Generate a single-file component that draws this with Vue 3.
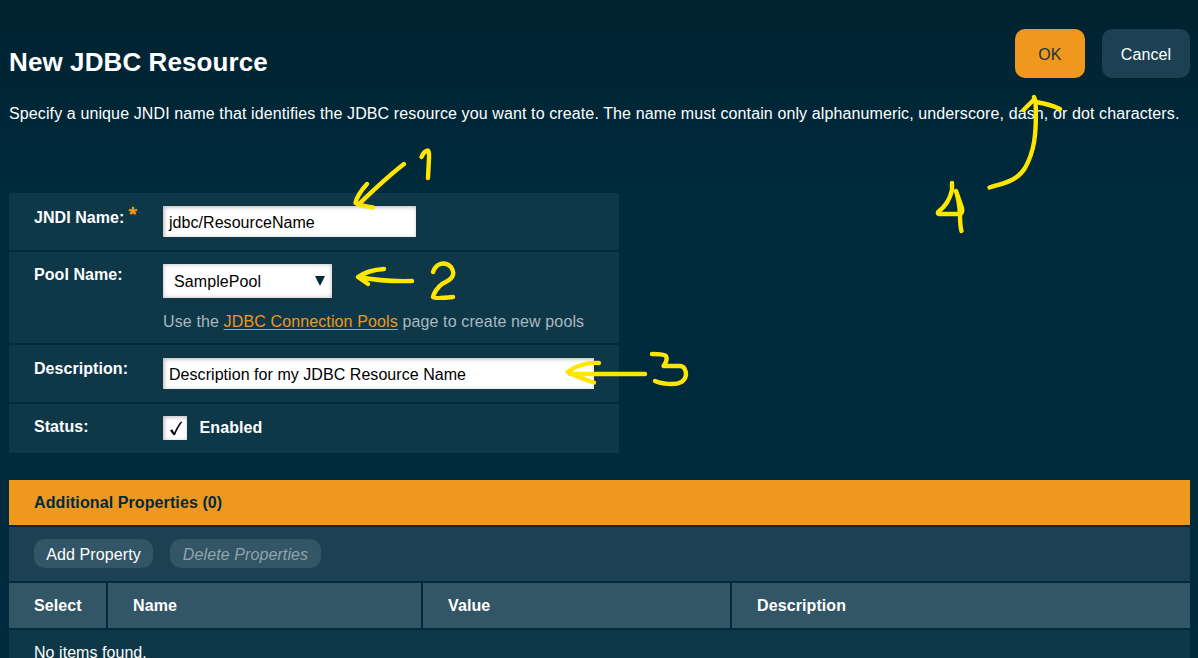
<script setup>
const columns = ['Select', 'Name', 'Value', 'Description']

const strokes = [
  // 1
  'M421.500 157 Q424 151 428 150.500 Q429.500 151 429 158 L428 178',
  'M404 164 Q387 177 358 205 M367 184 Q357 195 355.500 203 Q362 206 373 207.500',
  // 2
  'M433 272 C436 263 445 261 451 267 C457 276 450 280 442 284 C437 288 434 293 433 297 Q435 299 453 297',
  'M412 281 Q385 282 358 277 Q368 270 384 269 M358 277 L368 284',
  // 3
  'M652 354 Q664 354 666 356 Q668 360 663.500 366 H680 C684 366 686 370 686 375 C685 381 680 384 672 384 Q662 384 655 381',
  'M645 374 H570 M599 363 Q581 362 567.500 372 Q572 375 594 382.500',
  // 4
  'M952 183 V190 C950 199 946 206 938.500 211.500 Q937 214 939 214 H960.500 Q963 212 962 208 L956 191 Q959 200 960 214 Q960 226 961.500 231',
  'M989.500 187.500 C1004 183 1017 181 1025 168 C1034 152 1037 135 1035.500 101 L1034 97 M1023.500 110 L1034.500 99 M1036 102 Q1049 104 1060 109',
]
</script>

<template>
  <div class="page">
    <header class="head">
      <h1>New JDBC Resource</h1>
      <div class="actions">
        <button class="btn ok">OK</button>
        <button class="btn cancel">Cancel</button>
      </div>
    </header>
    <p class="intro">Specify a unique JNDI name that identifies the JDBC resource you want to create. The name must contain only alphanumeric, underscore, dash, or dot characters.</p>

    <section class="form">
      <div class="row r-jndi">
        <div class="label req-label">
          <span>JNDI Name:</span>
          <svg class="req" width="10" height="10" viewBox="0 0 10 10"><path d="M5 5V.8M5 5L.9 3.900M5 5L9.100 3.900M5 5L2.500 8.300M5 5L7.500 8.300" /></svg>
        </div>
        <div class="field short">jdbc/ResourceName</div>
      </div>
      <div class="row r-pool">
        <div class="label">Pool Name:</div>
        <div>
          <div class="select">
            <span>SamplePool</span>
            <svg width="10" height="10" viewBox="0 0 10 10"><path d="M0 0H10L5 10Z" /></svg>
          </div>
          <div class="help">Use the <a>JDBC Connection Pools</a> page to create new pools</div>
        </div>
      </div>
      <div class="row r-desc">
        <div class="label">Description:</div>
        <div class="field long">Description for my JDBC Resource Name</div>
      </div>
      <div class="row r-status">
        <div class="label">Status:</div>
        <div class="check">
          <div class="box">
            <svg width="24" height="24" viewBox="0 0 24 24"><path d="M7 14.600L9.200 13.200L11.300 16.800C13 12.500 15.300 8.600 17.800 5.800H19.400C16.500 9.600 14 14 12.200 18.800L10.500 19.300Z" /></svg>
          </div>
          <span>Enabled</span>
        </div>
      </div>
    </section>

    <section class="table">
      <div class="title">Additional Properties (0)</div>
      <div class="tools">
        <button class="pill add">Add Property</button>
        <button class="pill del" disabled>Delete Properties</button>
      </div>
      <div class="cols">
        <div v-for="c in columns" :key="c" class="th">{{ c }}</div>
      </div>
      <div class="empty">No items found.</div>
    </section>

    <svg class="notes" width="1198" height="658" viewBox="0 0 1198 658">
      <path v-for="(d, i) in strokes" :key="i" :d="d" />
    </svg>
  </div>
</template>

<style>
body {
  margin: 0;
  background: #002b3c;
}
</style>

<style scoped>
.page {
  position: relative;
  box-sizing: border-box;
  width: 1198px;
  height: 658px;
  padding: 29px 8px 0 9px;
  overflow: hidden;
  background: linear-gradient(#002230 0, #002b3c 200px);
  color: #fff;
  font: 16px/18px "Liberation Sans", Arial, sans-serif;
  letter-spacing: 0.1px;
}
.head {
  display: flex;
  justify-content: space-between;
  height: 49px;
}
h1 {
  margin: 17px 0 0;
  font-size: 26px;
  line-height: 32px;
  font-weight: bold;
}
.actions {
  display: flex;
  gap: 17px;
}
button {
  padding: 0;
  border: 0;
  font: inherit;
  letter-spacing: inherit;
  color: #fff;
}
.btn {
  height: 49px;
  padding-top: 2px;
  border-radius: 10px;
}
.ok {
  width: 70px;
  background: #f0981d;
  color: #16343f;
}
.cancel {
  width: 88px;
  background: #1b4152;
}
.intro {
  margin: 27px 0 0;
  white-space: nowrap;
  letter-spacing: 0.115px;
}
.form {
  display: flex;
  flex-direction: column;
  gap: 2px;
  width: 610px;
  margin-top: 70px;
}
.row {
  box-sizing: border-box;
  display: grid;
  grid-template-columns: 129px auto;
  justify-content: start;
  align-items: start;
  padding-left: 25px;
  background: #0e3747;
}
.r-jndi { height: 57px; padding-top: 13px; }
.r-pool { height: 91px; padding-top: 12px; }
.r-desc { height: 57px; padding-top: 13px; }
.r-status { height: 49px; padding-top: 12px; }
.label {
  padding-top: 2px;
  font-weight: bold;
  letter-spacing: 0.06px;
}
.req-label {
  display: flex;
  align-items: flex-start;
  gap: 4px;
}
.req-label span { padding-top: 1px; }
.req { margin-top: -2px; }
.req path {
  stroke: #f0981d;
  stroke-width: 2.3;
}
.field, .select, .box {
  box-sizing: border-box;
  background: #fff;
  color: #000;
  box-shadow: inset 1px 1px 4px rgba(0, 0, 0, 0.3);
}
.field {
  height: 31px;
  padding: 8px 6px 0;
  letter-spacing: 0.05px;
}
.short { width: 253px; }
.long { width: 431px; }
.select {
  display: flex;
  align-items: center;
  justify-content: space-between;
  width: 169px;
  height: 34px;
  padding: 2px 7px 0 11px;
  box-shadow: inset 0 0 4px rgba(0, 0, 0, 0.3);
}
.select svg { fill: #002b3c; margin-bottom: 2px; }
.help {
  margin-top: 15px;
  color: #a9b9c1;
  letter-spacing: 0.125px;
}
.help a {
  color: #f0981d;
  text-decoration: underline;
  text-decoration-thickness: 1px;
  text-underline-offset: 2px;
  text-decoration-skip-ink: none;
}
.check {
  display: flex;
  align-items: center;
  gap: 12.5px;
  font-weight: bold;
}
.box {
  width: 24px;
  height: 24px;
}
.box svg { display: block; }
.table {
  display: flex;
  flex-direction: column;
  gap: 2px;
  margin-top: 27px;
}
.title {
  height: 31px;
  padding: 14px 25px 0;
  background: #f0981d;
  color: #002b3c;
  font-weight: bold;
}
.tools {
  box-sizing: border-box;
  display: flex;
  gap: 17px;
  height: 54px;
  padding: 12px 25px 0;
  background: #1b4152;
}
.pill {
  height: 29px;
  padding-top: 2px;
  border-radius: 11px;
  background: #325665;
}
.add { width: 119px; }
.del {
  width: 151px;
  color: #91a4ad;
  font-style: italic;
}
.cols {
  display: grid;
  grid-template-columns: 97px 313px 307px 1fr;
  gap: 2px;
}
.th {
  height: 31px;
  padding: 14px 25px 0;
  background: #325665;
  font-weight: bold;
}
.empty {
  height: 45px;
  padding: 14px 25px 0;
  background: #0e3747;
  letter-spacing: 0.05px;
}
.notes {
  position: absolute;
  left: 0;
  top: 0;
  pointer-events: none;
}
.notes path {
  fill: none;
  stroke: #ffe600;
  stroke-width: 4.4;
  stroke-linecap: round;
  stroke-linejoin: round;
}
</style>
